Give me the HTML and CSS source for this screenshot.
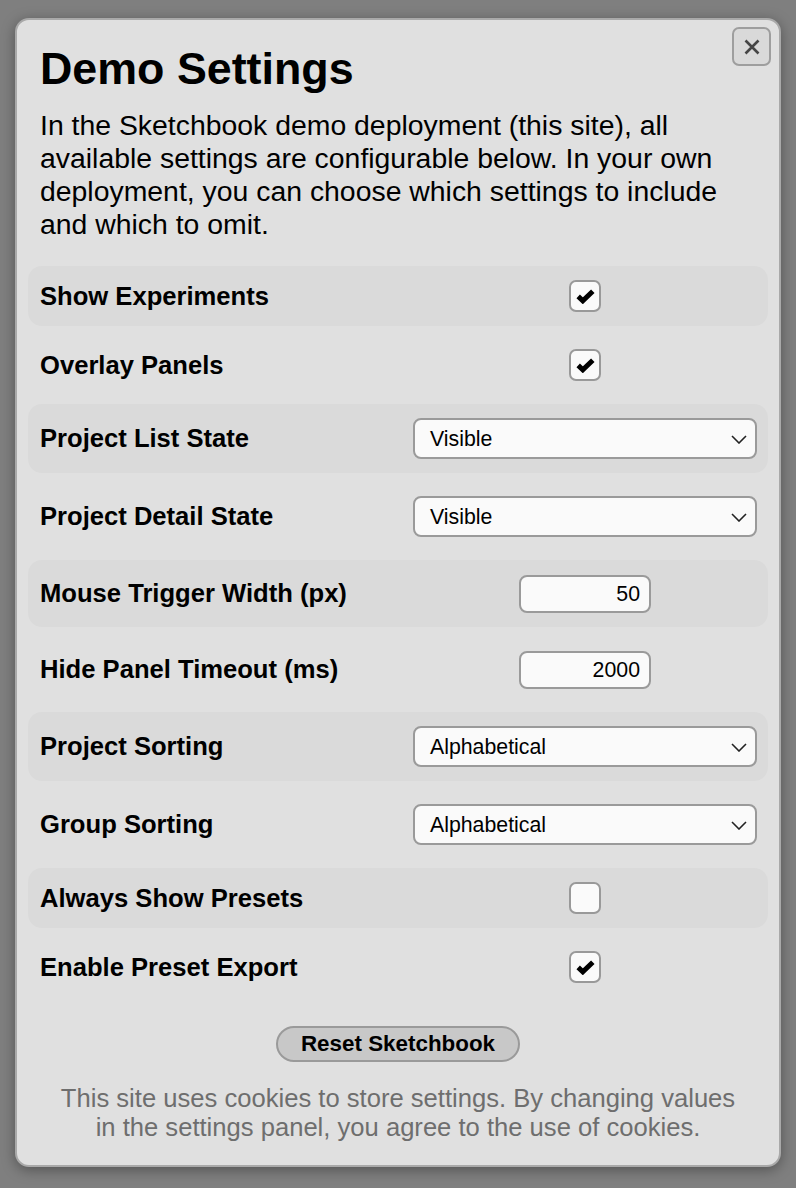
FILE: index.html
```html
<!DOCTYPE html>
<html lang="en">
<head>
<meta charset="utf-8">
<title>Demo Settings</title>
<link rel="stylesheet" href="styles.css">
</head>
<body>
<div class="modal">
  <button class="close" aria-label="Close">
    <svg width="16" height="16" viewBox="0 0 16 16"><path d="M1.5 1.5 L14.5 14.5 M14.5 1.5 L1.5 14.5" stroke="#454545" stroke-width="2.6" stroke-linecap="butt" fill="none"/></svg>
  </button>
  <h1 class="title">Demo Settings</h1>
  <p class="intro">In the Sketchbook demo deployment (this site), all available settings are configurable below. In your own deployment, you can choose which settings to include and which to omit.</p>

  <div class="settings">
    <div class="row shaded">
      <span class="label">Show Experiments</span>
      <div class="control"><span class="checkbox"><svg class="tick" width="19" height="15" viewBox="0 0 19 15"><path d="M2.2 7.4 L6.8 11.8 L16.8 2.2" stroke="#000" stroke-width="5" stroke-linejoin="miter" fill="none"/></svg></span></div>
    </div>
    <div class="row">
      <span class="label">Overlay Panels</span>
      <div class="control"><span class="checkbox"><svg class="tick" width="19" height="15" viewBox="0 0 19 15"><path d="M2.2 7.4 L6.8 11.8 L16.8 2.2" stroke="#000" stroke-width="5" stroke-linejoin="miter" fill="none"/></svg></span></div>
    </div>
    <div class="row shaded">
      <span class="label">Project List State</span>
      <div class="control">
        <div class="select">
          <span class="select-value">Visible</span>
          <svg class="chevron" width="16" height="9" viewBox="0 0 16 9"><path d="M1 1 L8 8 L15 1" stroke="#222" stroke-width="1.6" fill="none"/></svg>
        </div>
      </div>
    </div>
    <div class="row">
      <span class="label">Project Detail State</span>
      <div class="control">
        <div class="select">
          <span class="select-value">Visible</span>
          <svg class="chevron" width="16" height="9" viewBox="0 0 16 9"><path d="M1 1 L8 8 L15 1" stroke="#222" stroke-width="1.6" fill="none"/></svg>
        </div>
      </div>
    </div>
    <div class="row shaded row-num">
      <span class="label">Mouse Trigger Width (px)</span>
      <div class="control"><span class="number">50</span></div>
    </div>
    <div class="row row-num">
      <span class="label">Hide Panel Timeout (ms)</span>
      <div class="control"><span class="number">2000</span></div>
    </div>
    <div class="row shaded">
      <span class="label">Project Sorting</span>
      <div class="control">
        <div class="select">
          <span class="select-value">Alphabetical</span>
          <svg class="chevron" width="16" height="9" viewBox="0 0 16 9"><path d="M1 1 L8 8 L15 1" stroke="#222" stroke-width="1.6" fill="none"/></svg>
        </div>
      </div>
    </div>
    <div class="row">
      <span class="label">Group Sorting</span>
      <div class="control">
        <div class="select">
          <span class="select-value">Alphabetical</span>
          <svg class="chevron" width="16" height="9" viewBox="0 0 16 9"><path d="M1 1 L8 8 L15 1" stroke="#222" stroke-width="1.6" fill="none"/></svg>
        </div>
      </div>
    </div>
    <div class="row shaded">
      <span class="label">Always Show Presets</span>
      <div class="control"><span class="checkbox"></span></div>
    </div>
    <div class="row">
      <span class="label">Enable Preset Export</span>
      <div class="control"><span class="checkbox"><svg class="tick" width="19" height="15" viewBox="0 0 19 15"><path d="M2.2 7.4 L6.8 11.8 L16.8 2.2" stroke="#000" stroke-width="5" stroke-linejoin="miter" fill="none"/></svg></span></div>
    </div>
  </div>

  <div class="actions">
    <button class="reset">Reset Sketchbook</button>
  </div>
  <p class="note">This site uses cookies to store settings. By changing values in the settings panel, you agree to the use of cookies.</p>
</div>
</body>
</html>
```

FILE: styles.css
```css
* {
  box-sizing: border-box;
}

html, body {
  margin: 0;
  padding: 0;
}

body {
  background: #7f7f7f;
  font-family: "Liberation Sans", Arial, sans-serif;
  color: #000;
  padding: 18px 15px 20px;
}

.modal {
  position: relative;
  background: #e0e0e0;
  border: 2px solid #a9a9a9;
  border-radius: 14px;
  box-shadow: 0 3px 14px rgba(0, 0, 0, 0.35);
  padding: 0 11px 22px;
}

.close {
  position: absolute;
  top: 7px;
  right: 8px;
  width: 39px;
  height: 39px;
  padding: 0;
  border: 2px solid #9e9e9e;
  border-radius: 7px;
  background: #d9d9d9;
  display: flex;
  align-items: center;
  justify-content: center;
}

.title {
  margin: 23px 0 0;
  padding: 0 12px;
  font-size: 44.8px;
  line-height: 51px;
  font-weight: bold;
}

.intro {
  margin: 15px 0 0;
  padding: 0 12px;
  font-size: 28.4px;
  line-height: 33px;
}

.settings {
  margin-top: 25px;
  display: flex;
  flex-direction: column;
  gap: 9px;
}

.row {
  display: grid;
  grid-template-columns: 1fr 344px;
  align-items: center;
  padding: 14px 11px 14px 12px;
  border-radius: 14px;
}

.row.shaded {
  background: #dadada;
}

.row.row-num {
  padding-top: 14.5px;
  padding-bottom: 14.5px;
}

.label {
  font-size: 25.6px;
  line-height: 29px;
  font-weight: bold;
}

.control {
  display: flex;
  justify-content: center;
  align-items: center;
}

.checkbox {
  width: 32px;
  height: 32px;
  border: 2px solid #999;
  border-radius: 7px;
  background: #fafafa;
  display: flex;
  align-items: center;
  justify-content: center;
}

.tick {
  display: block;
}

.select {
  position: relative;
  width: 344px;
  height: 41px;
  border: 2px solid #9a9a9a;
  border-radius: 8px;
  background: #fafafa;
  display: flex;
  align-items: center;
  padding: 0 15px;
}

.select-value {
  font-size: 21.3px;
  line-height: 25px;
  padding-top: 2px;
}

.chevron {
  position: absolute;
  right: 8px;
  top: 15px;
}

.number {
  width: 132px;
  height: 38px;
  border: 2px solid #9a9a9a;
  border-radius: 8px;
  background: #fafafa;
  font-size: 21.3px;
  line-height: 34px;
  text-align: right;
  padding-right: 9px;
}

.actions {
  margin-top: 29px;
  display: flex;
  justify-content: center;
}

.reset {
  width: 244px;
  height: 36px;
  border: 2px solid #9a9a9a;
  border-radius: 18px;
  background: #c8c8c8;
  font-family: "Liberation Sans", Arial, sans-serif;
  font-size: 22.4px;
  font-weight: bold;
  color: #000;
  padding: 0;
}

.note {
  margin: 22px 0 0;
  padding: 0 30px;
  text-align: center;
  color: #6e6e6e;
  font-size: 25.6px;
  line-height: 29.4px;
}
```
